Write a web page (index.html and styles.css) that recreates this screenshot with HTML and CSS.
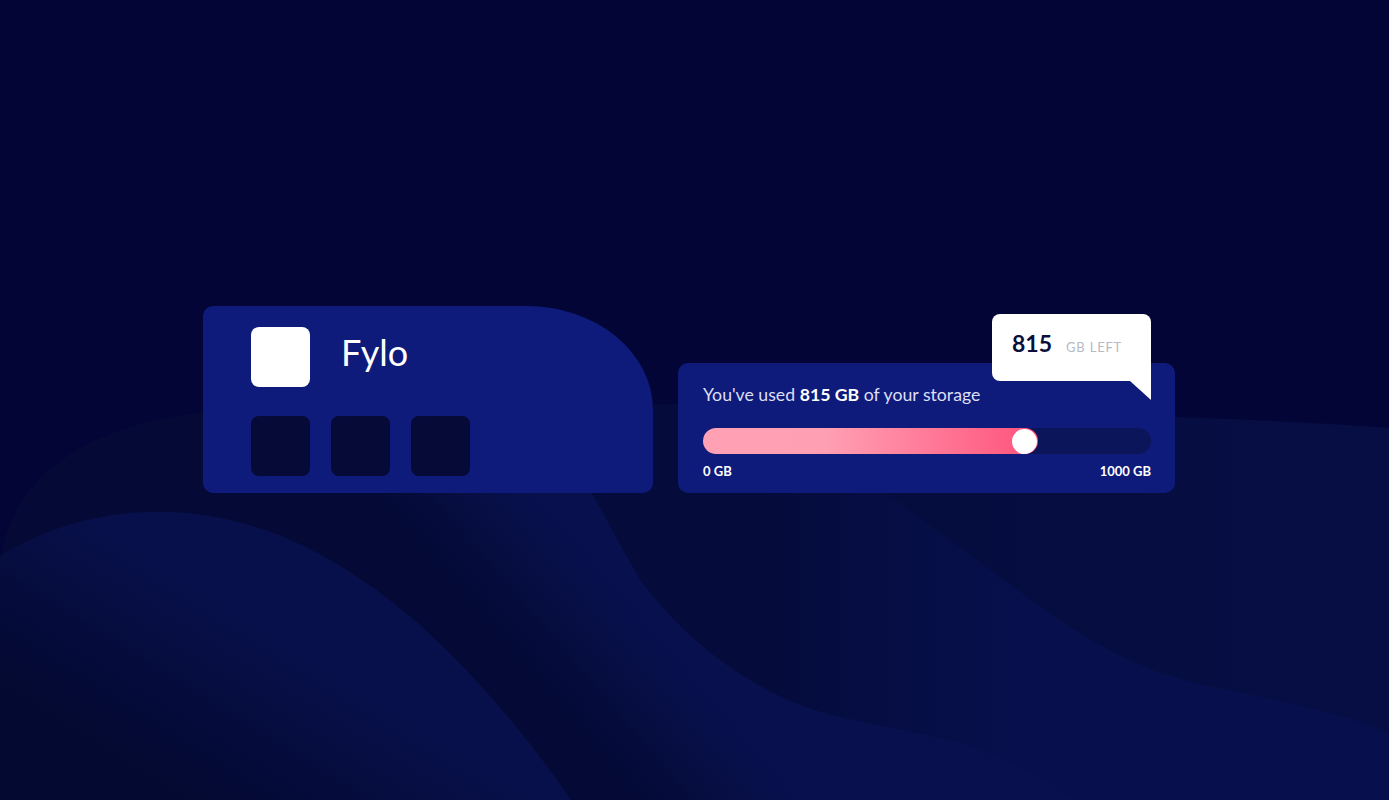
FILE: index.html
```html
<!DOCTYPE html>
<html lang="en">
<head>
<meta charset="utf-8">
<title>Fylo data storage</title>
<link rel="stylesheet" href="styles.css">
</head>
<body>
<svg class="bg" viewBox="0 0 1389 800" preserveAspectRatio="none" aria-hidden="true">
  <defs>
    <linearGradient id="gL" gradientUnits="userSpaceOnUse" x1="0" y1="0" x2="1389" y2="0">
      <stop offset="0" stop-color="#040a31"/>
      <stop offset="0.5" stop-color="#050b3b"/>
      <stop offset="1" stop-color="#060e44"/>
    </linearGradient>
    <linearGradient id="gP" gradientUnits="userSpaceOnUse" x1="760" y1="0" x2="1060" y2="0">
      <stop offset="0" stop-color="#050b3b"/>
      <stop offset="0.55" stop-color="#060e46"/>
      <stop offset="1" stop-color="#07104d"/>
    </linearGradient>
    <linearGradient id="gQ" gradientUnits="userSpaceOnUse" x1="-30" y1="26" x2="68" y2="-58">
      <stop offset="0" stop-color="#040a35"/>
      <stop offset="1" stop-color="#08114e"/>
    </linearGradient>
    <linearGradient id="gR" gradientUnits="userSpaceOnUse" x1="-307" y1="493" x2="-201" y2="323">
      <stop offset="0" stop-color="#030930"/>
      <stop offset="1" stop-color="#08104c"/>
    </linearGradient>
  </defs>
  <path fill="url(#gL)" d="M0,565 C10,480 80,425 210,412 C500,398 900,405 1175,417 C1280,421 1340,424 1389,428 L1389,800 L0,800 Z"/>
  <path fill="url(#gP)" d="M600,470 L850,470 C900,500 1000,580 1070,627 C1120,660 1170,680 1227,690 C1300,705 1360,718 1389,735 L1389,800 L600,800 Z"/>
  <path fill="url(#gQ)" d="M0,565 C10,480 80,425 210,412 L540,405 C565,440 600,510 640,580 C670,620 700,645 720,660 C760,690 800,708 840,717 C900,730 940,738 960,743 C1000,755 1040,775 1075,800 L0,800 Z"/>
  <path fill="url(#gR)" d="M0,556 C50,525 110,510 170,512 C270,516 350,565 420,625 C480,680 530,740 571,800 L0,800 Z"/>
</svg>

<main class="wrap">
  <section class="brand-card">
    <div class="brand-row">
      <div class="logo-box"></div>
      <span class="brand-name">Fylo</span>
    </div>
    <div class="tiles">
      <div class="tile"></div>
      <div class="tile"></div>
      <div class="tile"></div>
    </div>
  </section>

  <section class="storage-card">
    <p class="usage">You've used <strong>815 GB</strong> of your storage</p>
    <div class="track">
      <div class="fill" style="width: 74.8%"><span class="thumb"></span></div>
    </div>
    <div class="scale"><span>0 GB</span><span>1000 GB</span></div>
    <div class="callout">
      <span class="num">815</span>
      <span class="unit">GB LEFT</span>
    </div>
  </section>
</main>
</body>
</html>
```

FILE: styles.css
```css
* {
  box-sizing: border-box;
}

html, body {
  margin: 0;
  height: 100%;
}

body {
  position: relative;
  overflow: hidden;
  background: #020536;
  font-family: "Lato", "Open Sans", sans-serif;
  color: #ffffff;
}

.bg {
  position: absolute;
  left: 0;
  top: 0;
  width: 100%;
  height: 100%;
  z-index: 0;
}

.wrap {
  position: relative;
  z-index: 1;
  display: flex;
  align-items: flex-end;
  gap: 25px;
  height: 493px;
  padding-left: 203px;
}

.brand-card {
  width: 450px;
  height: 187px;
  padding: 21px 0 0 48px;
  background: #0f1b7a;
  border-radius: 10px 126px 10px 10px / 10px 104px 10px 10px;
}

.brand-row {
  display: flex;
  align-items: center;
  gap: 31px;
}

.logo-box {
  width: 59px;
  height: 60px;
  background: #ffffff;
  border-radius: 8px;
}

.brand-name {
  font-size: 36px;
  line-height: 1;
  margin-bottom: 10px;
  color: #ffffff;
}

.tiles {
  display: flex;
  gap: 21px;
  margin-top: 29px;
}

.tile {
  width: 59px;
  height: 60px;
  background: #050a37;
  border-radius: 8px;
}

.storage-card {
  position: relative;
  width: 497px;
  height: 130px;
  padding: 21px 24px 0 25px;
  background: #0f1b7a;
  border-radius: 10px;
}

.usage {
  margin: 0;
  font-size: 17.7px;
  line-height: 1.2;
  color: #dcdff4;
}

.usage strong {
  color: #ffffff;
  font-weight: 700;
}

.track {
  margin-top: 23px;
  height: 26px;
  border-radius: 13px;
  background: #0b1559;
}

.fill {
  height: 100%;
  display: flex;
  align-items: center;
  justify-content: flex-end;
  padding-right: 1px;
  border-radius: 13px;
  background: linear-gradient(to right, #ffa1b5 0%, #ff9fb3 37%, #ff527b 100%);
}

.thumb {
  width: 25px;
  height: 25px;
  border-radius: 50%;
  background: #ffffff;
}

.scale {
  display: flex;
  justify-content: space-between;
  margin-top: 10px;
  font-size: 13px;
  font-weight: 700;
  line-height: 1.2;
  color: #ffffff;
}

.callout {
  position: absolute;
  top: -49px;
  right: 24px;
  width: 159px;
  height: 67px;
  display: flex;
  align-items: baseline;
  gap: 14px;
  padding: 16px 0 0 20px;
  background: #ffffff;
  border-radius: 8px 8px 0 8px;
}

.callout::after {
  content: "";
  position: absolute;
  right: 0;
  top: 100%;
  width: 0;
  height: 0;
  border-top: 19px solid #ffffff;
  border-left: 21px solid transparent;
}

.num {
  font-size: 23px;
  font-weight: 700;
  line-height: 1.2;
  color: #0a0e3a;
}

.unit {
  font-size: 13px;
  letter-spacing: 0.8px;
  line-height: 1.2;
  color: #b7b9c4;
}
```
